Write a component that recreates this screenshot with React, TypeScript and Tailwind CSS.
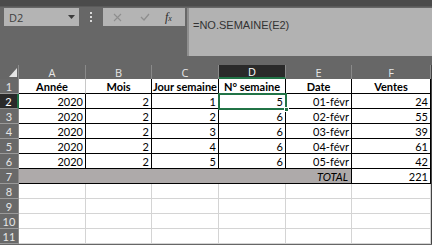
import React from "react";

const cols = ["A", "B", "C", "D", "E", "F"];
const widths = ["w-[67px]", "w-[66px]", "w-[67px]", "w-[67px]", "w-[66px]", "w-[79px]"];

const data: (string)[][] = [
  ["2020", "2", "1", "5", "01-févr", "24"],
  ["2020", "2", "2", "6", "02-févr", "55"],
  ["2020", "2", "3", "6", "03-févr", "39"],
  ["2020", "2", "4", "6", "04-févr", "61"],
  ["2020", "2", "5", "6", "05-févr", "42"],
];

function RowHeader({ n, active }: { n: number; active?: boolean }) {
  return active ? (
    <div className="w-[19px] h-[15px] shrink-0 bg-[#2a2a2a] border-b border-[#8a8a8a] border-r-2 border-r-[#217346] flex items-center justify-center text-[11px] text-white leading-none">
      {n}
    </div>
  ) : (
    <div className="w-[19px] h-[15px] shrink-0 bg-[#696969] border-b border-[#9a9a9a] border-r border-r-[#8a8a8a] flex items-center justify-center text-[11px] text-[#e6e6e6] leading-none">
      {n}
    </div>
  );
}

export default function App() {
  return (
    <div className="w-[432px] h-[245px] bg-[#676767] overflow-hidden flex flex-col" style={{ fontFamily: '"Open Sans", "Noto Sans", sans-serif' }}>
      {/* top strip */}
      <div className="h-[7px] bg-[#4b4b4b] border-b border-[#5a5a5a] shrink-0" />
      {/* toolbar */}
      <div className="h-[58px] shrink-0 flex items-start">
        <div className="ml-[4px] mt-[1px] w-[75px] h-[18px] bg-[#b4b4b4] flex items-center justify-between pl-[5px] pr-[4px]">
          <span className="text-[11px] text-[#404040] leading-none">D2</span>
          <svg width="7" height="4" viewBox="0 0 7 4"><path d="M0 0 H7 L3.5 4 Z" fill="#3c3c3c" /></svg>
        </div>
        <div className="w-[24px] h-[19px] flex flex-col items-center justify-center gap-[2px]">
          <div className="w-[2px] h-[2px] bg-[#d8d8d8]" />
          <div className="w-[2px] h-[2px] bg-[#d8d8d8]" />
          <div className="w-[2px] h-[2px] bg-[#d8d8d8]" />
        </div>
        <div className="mt-[1px] w-[82px] h-[18px] bg-[#b4b4b4] flex items-center">
          <svg className="ml-[10px]" width="9" height="9" viewBox="0 0 9 9"><path d="M1 1 L8 8 M8 1 L1 8" stroke="#8e8e8e" strokeWidth="1.1" /></svg>
          <svg className="ml-[18px]" width="10" height="8" viewBox="0 0 10 8"><path d="M1 4 L4 7 L9 1" stroke="#8e8e8e" strokeWidth="1.3" fill="none" /></svg>
          <span className="ml-[15px] text-[12px] italic text-[#2a2a2a] leading-none" style={{ fontFamily: '"Liberation Serif", serif' }}>
            f<span className="text-[8px]">x</span>
          </span>
        </div>
        <div className="ml-[2px] mt-[1px] flex-1 h-[48px] bg-[#b2b2b2] border-l-2 border-[#8f8f8f] pl-[4px] pt-[3px]">
          <span className="text-[11px] text-[#333333] leading-none" style={{ fontFamily: '"Liberation Sans", sans-serif' }}>=NO.SEMAINE(E2)</span>
        </div>
      </div>
      {/* column headers */}
      <div className="h-[14px] shrink-0 flex">
        <div className="w-[19px] h-[14px] shrink-0 border-r border-[#8a8a8a] flex items-end justify-end pr-[1px] pb-[2px]">
          <svg width="8" height="9" viewBox="0 0 8 9"><path d="M8 0 V9 H0 Z" fill="#e6e6e6" /></svg>
        </div>
        {cols.map((c, i) =>
          c === "D" ? (
            <div key={c} className={`${widths[i]} h-[14px] shrink-0 bg-[#2a2a2a] border-b-2 border-[#217346] border-r border-r-[#8a8a8a] flex items-center justify-center text-[11px] text-white leading-none`}>
              {c}
            </div>
          ) : (
            <div key={c} className={`${widths[i]} h-[14px] shrink-0 border-r border-[#8a8a8a] flex items-center justify-center text-[11px] text-[#e6e6e6] leading-none`}>
              {c}
            </div>
          )
        )}
        <div className="w-[1px] bg-[#444]" />
      </div>
      {/* sheet */}
      <div className="relative flex-1 flex flex-col" style={{ fontFamily: '"Lato", "Open Sans", sans-serif' }}>
        {/* row 1 */}
        <div className="flex h-[15px]">
          <RowHeader n={1} />
          {["Année", "Mois", "Jour semaine", "N° semaine", "Date", "Ventes"].map((t, i) => (
            <div key={t} className={`${widths[i]} h-[15px] shrink-0 bg-white border-b border-black border-r ${i === 0 ? "border-r-[#c8c8c8]" : "border-r-black"} flex items-center justify-center text-[11px] font-bold text-black leading-none whitespace-nowrap overflow-hidden`}>
              {t}
            </div>
          ))}
          <div className="w-[1px] bg-[#444]" />
        </div>
        {data.map((row, r) => (
          <div key={r} className="flex h-[15px]">
            <RowHeader n={r + 2} active={r === 0} />
            {row.map((t, i) => (
              <div key={i} className={`${widths[i]} h-[15px] shrink-0 bg-white border-b border-black border-r border-r-black flex items-center justify-end pr-[2px] text-[11px] text-black leading-none whitespace-nowrap`}>
                {t}
              </div>
            ))}
            <div className="w-[1px] bg-[#444]" />
          </div>
        ))}
        {/* row 7 */}
        <div className="flex h-[15px]">
          <RowHeader n={7} />
          <div className="w-[333px] h-[15px] shrink-0 bg-[#aeaaaa] border-b border-black border-r border-r-black flex items-center justify-end pr-[3px] text-[11px] italic text-black leading-none">
            TOTAL
          </div>
          <div className="w-[79px] h-[15px] shrink-0 bg-white border-b border-black border-r border-r-black flex items-center justify-end pr-[2px] text-[11px] text-black leading-none">
            221
          </div>
          <div className="w-[1px] bg-[#444]" />
        </div>
        {[8, 9, 10, 11].map((n) => (
          <div key={n} className="flex h-[15px]">
            <RowHeader n={n} />
            {widths.map((w, i) => (
              <div key={i} className={`${w} h-[15px] shrink-0 bg-white border-b border-r border-[#d4d4d4]`} />
            ))}
            <div className="w-[1px] bg-[#444]" />
          </div>
        ))}
        {/* selection overlay on D2 */}
        <div className="absolute left-[218px] top-[14px] w-[69px] h-[17px] border-2 border-[#217346] pointer-events-none">
          <div className="absolute right-[-4px] bottom-[-4px] w-[5px] h-[5px] bg-[#217346] border border-white" />
        </div>
      </div>
    </div>
  );
}
